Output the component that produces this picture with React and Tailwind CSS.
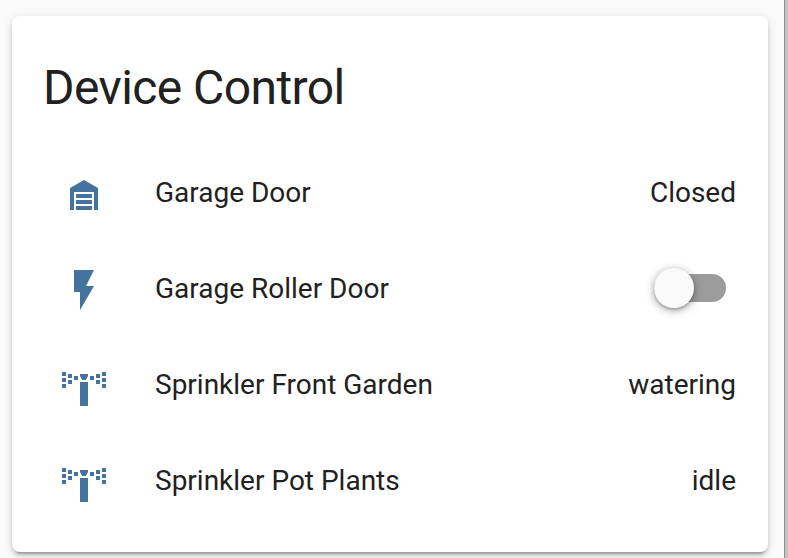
import React from "react";

const paths = {
  garage:
    "M19,20H17V11H7V20H5V9L12,5L19,9V20M8,12H16V14H8V12M8,15H16V17H8V15M16,18V20H8V18H16Z",
  flash: "M7,2V13H10V22L17,10H13L17,2H7Z",
  sprinkler:
    "M1 5h2v2H1zM1 8h2v2H1zM1 11h2v2H1zM4 6h2v2H4zM4 9h2v2H4zM7 7h2v2H7zM15 7h2v2h-2zM18 6h2v2h-2zM18 9h2v2h-2zM21 5h2v2h-2zM21 8h2v2h-2zM21 11h2v2h-2zM10 10h4v12h-4zM10 6h4v1L13 9H11L10 7z",
};

function Toggle() {
  return (
    <div className="mr-[10px] flex h-7 w-[72px] items-center rounded-full bg-[#9c9c9c]">
      <div className="size-10 shrink-0 rounded-full bg-[#fafafa] shadow-[0_2px_8px_rgba(0,0,0,0.4),0_2px_2px_rgba(0,0,0,0.15)]" />
    </div>
  );
}

function Row({ icon, name, children }) {
  return (
    <div className="flex h-20 items-center">
      <svg viewBox="0 0 24 24" className="ml-4 mt-1 size-12 shrink-0 fill-[#44739e]">
        <path d={paths[icon]} />
      </svg>
      <div className="ml-[47px] flex-1 whitespace-nowrap pt-0.5">{name}</div>
      {children}
    </div>
  );
}

export default function App() {
  return (
    <div className="flex h-[558px] w-[788px] overflow-hidden bg-[#fafafa] font-['Roboto',sans-serif] text-[#212121]">
      <div className="ml-3 mt-4 h-[536px] w-[756px] shrink-0 rounded-lg bg-white px-8 shadow-[0_4px_4px_rgba(0,0,0,0.14),0_2px_10px_rgba(0,0,0,0.12),0_6px_2px_-4px_rgba(0,0,0,0.2)]">
        <h1 className="-ml-px pt-10 text-[48px] leading-[64px] tracking-[-0.012em]">Device Control</h1>
        <div className="mt-8 flex flex-col gap-4 text-[28px] leading-10">
          <Row icon="garage" name="Garage Door">
            <div className="pt-0.5">Closed</div>
          </Row>
          <Row icon="flash" name="Garage Roller Door">
            <Toggle />
          </Row>
          <Row icon="sprinkler" name="Sprinkler Front Garden">
            <div className="pt-0.5">watering</div>
          </Row>
          <Row icon="sprinkler" name="Sprinkler Pot Plants">
            <div className="pt-0.5">idle</div>
          </Row>
        </div>
      </div>
      <div className="ml-4 w-1 shrink-0 border-l border-[#8e8e8e] bg-[#c4c4c4]" />
    </div>
  );
}
